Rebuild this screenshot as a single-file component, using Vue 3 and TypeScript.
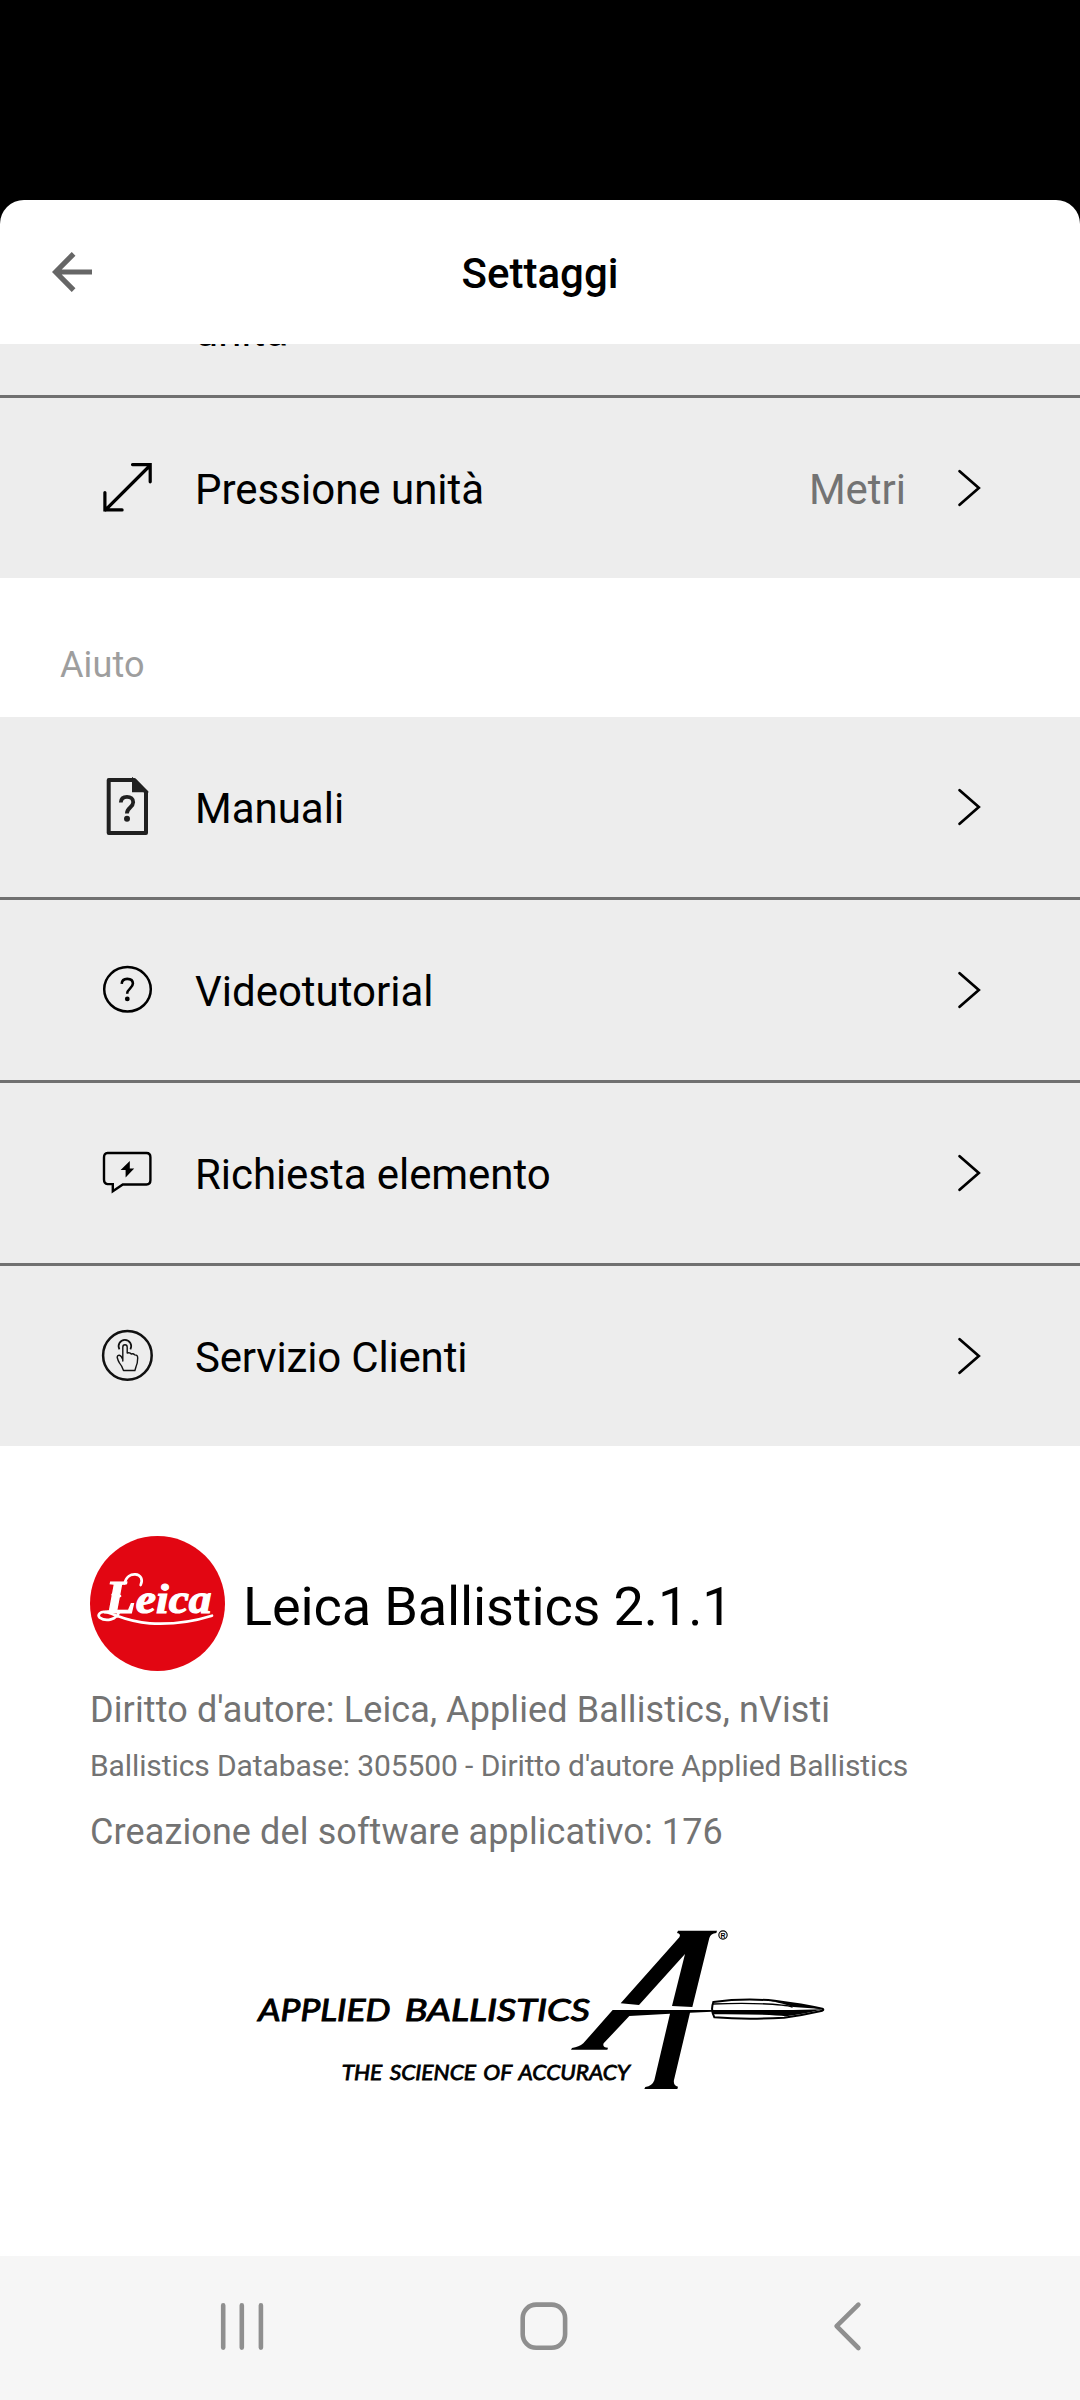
<script setup lang="ts">
type IconName = 'manual' | 'help' | 'request' | 'touch'

interface HelpItem {
  label: string
  icon: IconName
}

const helpItems: HelpItem[] = [
  { label: 'Manuali', icon: 'manual' },
  { label: 'Videotutorial', icon: 'help' },
  { label: 'Richiesta elemento', icon: 'request' },
  { label: 'Servizio Clienti', icon: 'touch' },
]
</script>

<template>
  <div class="screen">
    <div class="sheet">
      <header class="header">
        <svg class="back" viewBox="0 0 40 40" fill="none" stroke="#666" stroke-width="5.2">
          <path d="M40 20H4M21.6 1.8L3.6 20l18 18.2" />
        </svg>
        <h1 class="title">Settaggi</h1>
      </header>

      <main class="content">
        <div class="row-partial"><span class="label">unità</span></div>
        <div class="row divided">
          <svg class="icon" viewBox="0 0 60 60" fill="none" stroke="#000" stroke-width="3.2" stroke-linecap="round">
            <path d="M7.5 52L52 7.5M34.5 6.6h17.7v17.2M6.9 34.5v17.4h17.2" />
          </svg>
          <span class="label">Pressione unità</span>
          <span class="value">Metri</span>
          <svg class="chevron" viewBox="0 0 24 38"><path d="M1.6 2.2L20.8 19 1.6 35.8" /></svg>
        </div>

        <h2 class="section">Aiuto</h2>

        <div v-for="(item, i) in helpItems" :key="item.label" class="row" :class="[item.icon, { divided: i > 0 }]">
          <svg v-if="item.icon === 'manual'" class="icon" viewBox="0 0 60 60" fill="none">
            <path d="M10.7 3h25.6L48 14.8V56H10.7z" stroke="#202020" stroke-width="4" stroke-linejoin="round" />
            <path d="M35 2v12.3h13.5z" fill="#202020" stroke="#202020" stroke-width="2" />
            <path d="M22.8 25.5c.2-3.6 2.7-5.6 6.2-5.6 3.7 0 6.2 2 6.2 5.3 0 5.3-6.3 5.3-6.3 11.2" stroke="#202020" stroke-width="3.8" />
            <circle cx="29" cy="41.8" r="3" fill="#202020" />
          </svg>
          <svg v-else-if="item.icon === 'help'" class="icon" viewBox="0 0 60 60" fill="none">
            <ellipse cx="29.5" cy="29.3" rx="23.3" ry="22.2" stroke="#000" stroke-width="2.5" />
            <path d="M23.7 23.8c.2-3.2 2.3-4.9 5.5-4.9 3.4 0 5.7 1.8 5.7 4.7 0 4.7-5.7 5-5.7 10.2" stroke="#000" stroke-width="2.6" />
            <circle cx="29.3" cy="38.9" r="2.4" fill="#000" />
          </svg>
          <svg v-else-if="item.icon === 'request'" class="icon" viewBox="0 0 60 60" fill="none">
            <path
              d="M9.5 10h39q3.9 0 3.9 4.3v23q0 4.2-3.9 4.2H24.8l-10 6.8v-7.2H9.5q-3.5-.5-3.5-4.6v-22q0-4.5 3.5-4.5z"
              stroke="#000"
              stroke-width="2.4"
            />
            <path d="M31.8 18v7.6h4.4L27.6 34.4v-7.3h-5z" fill="#000" />
          </svg>
          <svg v-else class="icon" viewBox="0 0 60 60" fill="none" stroke="#111" stroke-linejoin="round">
            <circle cx="29.4" cy="29.4" r="24.3" stroke-width="2.5" />
            <path d="M21.4 23.3a6.3 6.3 0 1 1 11 0" stroke-width="1.7" />
            <path
              d="M24.8 35V21.2q0-2.5 2.2-2.5t2.2 2.5V27q2.8-.8 4.1 1 2.3-.6 3.3.9 3.1-.2 3.1 3.2 0 5-1.7 8.7l-1.1 3.7H25.5q-1.5-4.7-4.1-7.6-1.4-2.4-2.2-5.4 0-2.3 2.2-2.2 1.7.2 3.4 4.3z"
              stroke-width="1.4"
            />
          </svg>
          <span class="label">{{ item.label }}</span>
          <svg class="chevron" viewBox="0 0 24 38"><path d="M1.6 2.2L20.8 19 1.6 35.8" /></svg>
        </div>

        <section class="about">
          <div class="brand">
            <svg class="leica" viewBox="0 0 405 405">
              <circle cx="202.5" cy="202.5" r="202.5" fill="#e20612" />
              <text class="script" x="46" y="232" fill="#fff" stroke="#fff" stroke-width="3.5" textLength="319" lengthAdjust="spacingAndGlyphs"><tspan font-size="140">L</tspan><tspan font-size="128">eica</tspan></text>
              <g fill="none" stroke="#fff" stroke-linecap="round">
                <path d="M68 176q10 5 22 4M104 142c4-20 18-28 32-27 16 1 24 15 16 32" stroke-width="8" />
                <path d="M88 226C80 252 48 258 29 245c-8-9 2-20 18-17 24 5 64 29 132 34q94 6 187-23" stroke-width="8" />
              </g>
            </svg>
            <span class="app-name">Leica Ballistics 2.1.1</span>
          </div>
          <p class="line copyright">Diritto d'autore: Leica, Applied Ballistics, nVisti</p>
          <p class="line database">Ballistics Database: 305500 - Diritto d'autore Applied Ballistics</p>
          <p class="line build">Creazione del software applicativo: 176</p>
          <svg class="ab-logo" viewBox="-870 45 1740 540">
            <g class="ab-text">
              <text x="-845" y="362" font-size="94" textLength="396" lengthAdjust="spacingAndGlyphs">APPLIED</text>
              <text x="-406" y="362" font-size="94" textLength="556" lengthAdjust="spacingAndGlyphs">BALLISTICS</text>
              <text class="tagline" x="-595" y="539" font-size="65" word-spacing="6" textLength="865" lengthAdjust="spacingAndGlyphs">THE SCIENCE OF ACCURACY</text>
            </g>
            <path d="M414 92H531L529 99Q512 100 508 114L457 321 396 318 435 162 297 315 242 310 418 112Q424 101 411 99Z" />
            <path d="M218 330H516V335L450 338 402 540Q399 556 414 560L412 567H313L316 561Q337 558 343 541L390 341 268 348 191 430Q186 442 204 443L202 449H93L96 444Q117 441 130 430Z" />
            <path d="M520 306Q610 294 704 302 790 313 847 326 853 329 847 332 790 345 732 353 620 360 523 352 511 330 520 306Z" fill="#fff" stroke="#000" stroke-width="6" />
            <path d="M519 312Q610 308 681 312T758 322" fill="none" stroke="#000" stroke-width="4" />
            <path d="M517 330H760L848 328Q790 343 738 349 680 342 517 343Z" />
            <path d="M690 302Q770 309 846 327L760 321Q728 310 690 302Z" />
            <circle cx="549" cy="105" r="12.5" fill="none" stroke="#000" stroke-width="3.4" />
            <text class="reg" x="541.5" y="113" font-size="21">R</text>
          </svg>
        </section>
      </main>
    </div>

    <nav class="navbar">
      <svg class="nav-icons" viewBox="0 0 1080 144" fill="none" stroke="#8f8f8f" stroke-width="4.6" stroke-linecap="round" stroke-linejoin="round">
        <path d="M223.2 49.4v42.2M241.8 49.4v42.2M260.9 49.4v42.2" />
        <rect x="522.7" y="48.6" width="42.4" height="43.2" rx="13.5" />
        <path d="M858.4 48.6L836.6 70.2l21.8 21.8" />
      </svg>
    </nav>
  </div>
</template>

<style>
body {
  margin: 0;
  background: #000;
}
</style>

<style scoped>
.screen {
  display: flex;
  flex-direction: column;
  box-sizing: border-box;
  width: 1080px;
  height: 2400px;
  padding-top: 200px;
  background: #000;
  color: #000;
  font-family: Roboto, sans-serif;
  overflow: hidden;
}

.sheet {
  display: flex;
  flex: 1;
  flex-direction: column;
  min-height: 0;
  border-radius: 24px 24px 0 0;
  background: #fff;
  overflow: hidden;
}

.header {
  display: grid;
  grid-template-columns: 92px 1fr 92px;
  flex: none;
  align-items: center;
  height: 144px;
}

.back {
  justify-self: end;
  width: 40px;
  height: 40px;
}

.title {
  margin: 3px 0 0;
  font-size: 42px;
  font-weight: 500;
  line-height: 50px;
  text-align: center;
}

.content {
  flex: 1;
  min-height: 0;
  overflow: hidden;
}

.row-partial {
  height: 88px;
  margin-top: -37px;
  padding-left: 195px;
  background: #ededed;
}

.row {
  display: flex;
  align-items: center;
  height: 180px;
  padding: 0 98px;
  background: #ededed;
}

.divided {
  border-top: 3px solid #707070;
}

.icon {
  flex: none;
  width: 60px;
  height: 60px;
  margin-right: 37px;
}

.label,
.value {
  font-size: 42px;
  line-height: 49px;
}

.row .label,
.row .value {
  padding-top: 3px;
}

.request .label {
  letter-spacing: -0.06px;
}

.touch .label {
  letter-spacing: -0.17px;
}

.value {
  margin-left: auto;
  color: #737373;
}

.chevron {
  flex: none;
  width: 24px;
  height: 38px;
  margin-left: auto;
  fill: none;
  stroke: #000;
  stroke-width: 2.7;
  stroke-linecap: round;
}

.value + .chevron {
  margin-left: 52px;
}

.section {
  box-sizing: border-box;
  height: 139px;
  margin: 0;
  padding: 66px 0 0 60px;
  color: #9e9e9e;
  font-size: 36px;
  font-weight: 400;
  letter-spacing: 0.1px;
  line-height: 42px;
}

.about {
  padding: 90px 0 0 90px;
}

.brand {
  display: flex;
  align-items: center;
  height: 135px;
}

.leica {
  width: 135px;
  height: 135px;
}

.script {
  font-family: 'Liberation Serif', serif;
  font-style: italic;
  font-weight: 700;
}

.app-name {
  margin-left: 18px;
  padding-top: 7px;
  font-size: 54px;
  letter-spacing: -0.11px;
  line-height: 64px;
}

.line {
  margin: 0;
  color: #737373;
  font-size: 36px;
  letter-spacing: 0.11px;
  line-height: 42px;
  white-space: nowrap;
}

.copyright {
  padding-top: 18px;
}

.database {
  padding-top: 17px;
  font-size: 30px;
  letter-spacing: -0.107px;
  line-height: 36px;
}

.build {
  padding-top: 27px;
}

.ab-logo {
  display: block;
  width: 580px;
  height: 180px;
  margin: 62px 0 0 160px;
}

.ab-text {
  font-family: Lato, sans-serif;
  font-style: italic;
  font-weight: 400;
  stroke: #000;
  stroke-width: 3;
}

.tagline {
  stroke-width: 2.4;
}

.reg {
  font-family: 'Liberation Sans', sans-serif;
  font-weight: 700;
}

.navbar {
  flex: none;
  height: 144px;
  background: #f6f6f6;
}

.nav-icons {
  display: block;
  width: 1080px;
  height: 144px;
}
</style>
